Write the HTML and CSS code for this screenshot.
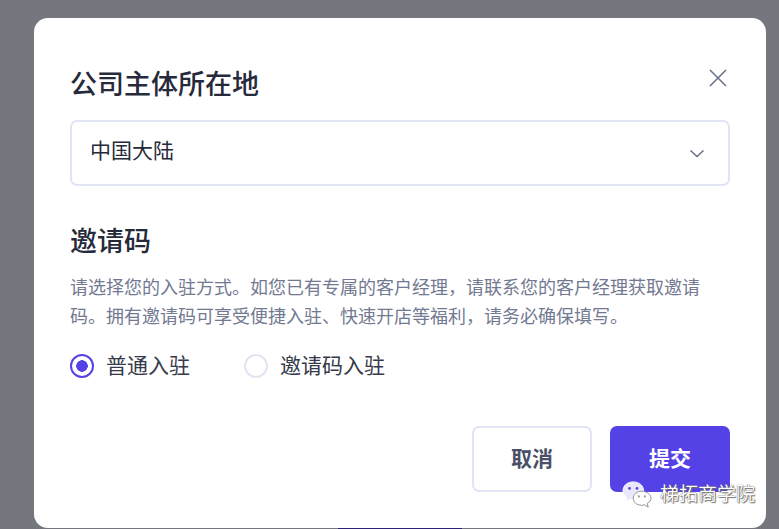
FILE: index.html
```html
<!DOCTYPE html>
<html lang="zh-CN">
<head>
<meta charset="UTF-8" />
<meta name="viewport" content="width=device-width, initial-scale=1" />
<title>公司主体所在地</title>
<link rel="stylesheet" href="styles.css">
</head>
<body>

<div class="modal">
  <div class="modal-head">
    <h2 class="title">公司主体所在地</h2>
    <svg class="close" width="20" height="20" viewBox="0 0 20 20" fill="none" stroke="#6b7189" stroke-width="1.6">
      <path d="M2 2 L18 18 M18 2 L2 18" />
    </svg>
  </div>

  <div class="select">
    <span class="select-text">中国大陆</span>
    <svg width="16" height="9" viewBox="0 0 16 9" fill="none" stroke="#6b7189" stroke-width="1.6">
      <path d="M1.5 1.5 L8 7.5 L14.5 1.5" />
    </svg>
  </div>

  <h2 class="title section">邀请码</h2>
  <p class="desc">请选择您的入驻方式。如您已有专属的客户经理，请联系您的客户经理获取邀请码。拥有邀请码可享受便捷入驻、快速开店等福利，请务必确保填写。</p>

  <div class="radios">
    <label class="radio"><span class="dot checked"></span><span class="radio-text">普通入驻</span></label>
    <label class="radio"><span class="dot"></span><span class="radio-text">邀请码入驻</span></label>
  </div>

  <div class="footer">
    <button class="btn">取消</button>
    <button class="btn primary">提交</button>
  </div>

  <div class="watermark">
    <svg width="32" height="28" viewBox="0 0 32 30">
      <path d="M12 1 C5.500 1 1 5 1 10.500 C1 13.500 2.600 16 5 17.500 L4 22 L8.500 19.500 C10 19.900 11 20 12 20 C18.500 20 23 15.500 23 10.500 C23 5 18.500 1 12 1 Z" fill="#e9e7fc" stroke="#fff" stroke-width="1" />
      <circle cx="8" cy="8" r="1.500" fill="#5542e6" />
      <circle cx="16" cy="8" r="1.500" fill="#5542e6" />
      <path d="M21 11 C15.500 11 12 14.500 12 18.500 C12 22.500 15.500 26 21 26 C22 26 23 25.800 24 25.500 L28 28 L27 24 C29.500 22.500 31 20.700 31 18.500 C31 14.500 26.500 11 21 11 Z" fill="#fff" stroke="#8b8b8b" stroke-width="1" />
      <circle cx="18" cy="16.500" r="1.200" fill="#999" />
      <circle cx="24.500" cy="16.500" r="1.200" fill="#999" />
    </svg>
    <span class="watermark-text">梯拓商学院</span>
  </div>
</div>
<div class="under"></div>

</body>
</html>
```

FILE: styles.css
```css
html, body {
  height: 100%;
}
body {
  margin: 0;
  background-color: #75777e;
  color: #262a3b;
  font-family: Inter, "Noto Sans CJK SC", sans-serif;
  overflow: hidden;
}
.modal {
  position: relative;
  box-sizing: border-box;
  height: 510px;
  margin: 18px 13px 0 34px;
  padding: 47px 36px 36px;
  background-color: #fff;
  border-radius: 14px;
}
.modal-head {
  display: flex;
  justify-content: space-between;
  align-items: flex-start;
}
.title {
  margin: 0;
  font-size: 27px;
  font-weight: 500;
  line-height: 40px;
  color: #262a3b;
}
.title.section {
  margin-top: 36px;
}
.close {
  margin-top: 3px;
  margin-right: 2px;
}
.select {
  display: flex;
  justify-content: space-between;
  align-items: center;
  box-sizing: border-box;
  height: 66px;
  margin-top: 15px;
  padding: 0 23px 0 18px;
  border: 2px solid #e1e4f3;
  border-radius: 7px;
  font-size: 21px;
}
.select-text {
  padding-bottom: 8px;
}
.desc {
  margin: 11px 0 0;
  font-size: 18px;
  line-height: 29px;
  color: #727991;
}
.radios {
  display: flex;
  gap: 54px;
  margin-top: 23px;
}
.radio {
  display: flex;
  align-items: center;
  gap: 12px;
  height: 24px;
  font-size: 21px;
  color: #363a4b;
}
.radio-text {
  padding-bottom: 4px;
}
.dot {
  box-sizing: border-box;
  width: 24px;
  height: 24px;
  border: 2px solid #e1e4f3;
  border-radius: 50%;
}
.dot.checked {
  border-color: #5542e6;
  background: radial-gradient(circle, #5542e6 0, #5542e6 5.500px, #fff 6px);
}
.footer {
  display: flex;
  justify-content: flex-end;
  gap: 18px;
  margin-top: 48px;
}
.btn {
  box-sizing: border-box;
  width: 120px;
  height: 66px;
  padding: 0 0 4px;
  background-color: #fff;
  border: 2px solid #e1e4f3;
  border-radius: 7px;
  color: #4a5068;
  font-family: inherit;
  font-size: 21px;
  font-weight: 700;
}
.btn.primary {
  background-color: #5542e6;
  border-color: #5542e6;
  color: #fff;
}
.watermark {
  position: absolute;
  left: 587px;
  top: 463px;
  display: flex;
  align-items: center;
  gap: 7px;
  color: #fff;
}
.watermark-text {
  font-size: 19px;
  line-height: 28px;
  text-shadow: 0 0 1px #333, 1px 1px 1px #777;
}
.under {
  width: 124px;
  height: 1px;
  margin-left: 338px;
  background-color: #2b2278;
}
```
